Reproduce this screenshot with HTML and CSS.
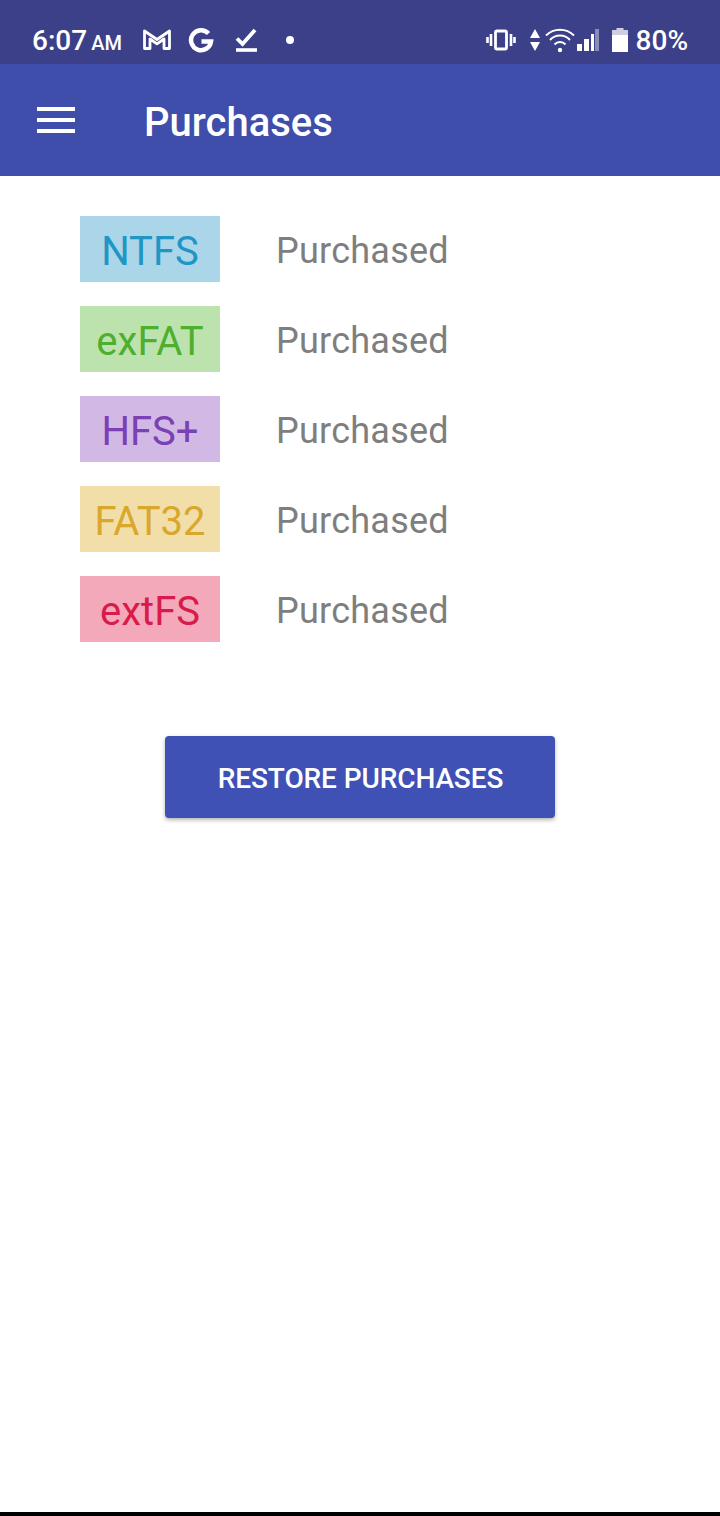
FILE: index.html
```html
<!DOCTYPE html>
<html lang="en">
<head>
    <meta charset="UTF-8">
    <title>Purchases</title>
    <link rel="stylesheet" href="styles.css">
</head>
<body>
<div class="status-bar">
    <div class="status-left">
        <span class="clock">6:07<small>AM</small></span>
        <svg class="icon-gmail" width="28" height="22" viewBox="0 0 28 22"><path d="M1.500 19.500V2L14 10.500 26.500 2V19.500H21V10L14 14.800 7 10V19.500Z" fill="none" stroke="#fff" stroke-width="2.800" stroke-linejoin="round"/></svg>
        <svg class="icon-g" width="26" height="26" viewBox="0 0 26 26"><path d="M20.500 6.500A10 10 0 1 0 23 14.500H13.500" fill="none" stroke="#fff" stroke-width="4.500"/></svg>
        <svg class="icon-check" width="24" height="26" viewBox="0 0 24 26"><path d="M3 11.500L8.500 17 21 3" fill="none" stroke="#fff" stroke-width="3.800"/><path d="M2 23H23" stroke="#fff" stroke-width="3.600"/></svg>
        <span class="dot"></span>
    </div>
    <div class="status-right">
        <svg width="30" height="22" viewBox="0 0 30 22"><rect x="9.500" y="2" width="11" height="18" rx="1.500" fill="none" stroke="#fff" stroke-width="2.800"/><path d="M5 5V17M1.500 8V14M25 5V17M28.500 8V14" stroke="#fff" stroke-width="2.600"/></svg>
        <svg class="icon-arrows" width="12" height="24" viewBox="0 0 12 24"><path d="M6 1L11 10H1ZM6 23L1 14H11Z" fill="#fff"/></svg>
        <svg class="icon-wifi" width="30" height="26" viewBox="0 0 30 26"><path d="M1 8.500A20 20 0 0 1 29 8.500M5 13A13.500 13.500 0 0 1 25 13M9.500 17.500A7.500 7.500 0 0 1 20.500 17.500" fill="none" stroke="#fff" stroke-width="2"/><circle cx="15" cy="23" r="2.200" fill="#fff"/></svg>
        <svg class="icon-signal" width="22" height="24" viewBox="0 0 22 24"><path d="M0 23V16H5V23ZM7 23V11H12V23ZM14 23V6H17V23Z" fill="#fff"/><path d="M18 23V1H22V23Z" fill="#fff" fill-opacity=".4"/></svg>
        <svg class="icon-battery" width="18" height="26" viewBox="0 0 18 26"><path d="M5.500 1H12.500V3H17V8H1V3H5.500Z" fill="#fff" fill-opacity=".75"/><path d="M1 8H17V25H1Z" fill="#fff"/></svg>
        <span class="battery-text">80%</span>
    </div>
</div>

<header class="app-bar">
    <svg class="menu-icon" width="38" height="26" viewBox="0 0 38 26"><path d="M0 2H38M0 13H38M0 24H38" stroke="#fff" stroke-width="4"/></svg>
    <h1>Purchases</h1>
</header>

<div class="purchase-list">
    <div class="purchase-row">
        <span class="fs-tag tag-ntfs">NTFS</span>
        <span class="purchase-state">Purchased</span>
    </div>
    <div class="purchase-row">
        <span class="fs-tag tag-exfat">exFAT</span>
        <span class="purchase-state">Purchased</span>
    </div>
    <div class="purchase-row">
        <span class="fs-tag tag-hfs">HFS+</span>
        <span class="purchase-state">Purchased</span>
    </div>
    <div class="purchase-row">
        <span class="fs-tag tag-fat32">FAT32</span>
        <span class="purchase-state">Purchased</span>
    </div>
    <div class="purchase-row">
        <span class="fs-tag tag-extfs">extFS</span>
        <span class="purchase-state">Purchased</span>
    </div>
</div>

<div class="restore-area">
    <a href="#" class="restore-button">RESTORE PURCHASES</a>
</div>

<div class="bottom-edge"></div>
</body>
</html>
```

FILE: styles.css
```css
html, body {
    margin: 0;
    height: 100%;
}

body {
    display: flex;
    flex-direction: column;
    background-color: #fff;
    font-family: Roboto, sans-serif;
}

.status-bar {
    display: flex;
    justify-content: space-between;
    align-items: center;
    height: 64px;
    padding: 16px 32px 0;
    box-sizing: border-box;
    background-color: #3b4088;
    color: #fff;
}

.status-left, .status-right {
    display: flex;
    align-items: center;
}

.clock {
    font-size: 28px;
    font-weight: 500;
    margin-right: 21px;
}

.clock small {
    font-size: 20px;
    margin-left: 4px;
}

.icon-g {
    margin-left: 17px;
}

.icon-check {
    margin-left: 20px;
}

.dot {
    width: 8px;
    height: 8px;
    margin-left: 28px;
    border-radius: 50%;
    background-color: #fff;
}

.icon-arrows {
    margin-left: 13px;
}

.icon-wifi {
    margin-left: 4px;
}

.icon-signal {
    margin-left: 2px;
}

.icon-battery {
    margin-left: 12px;
}

.battery-text {
    margin-left: 7px;
    font-size: 28px;
    font-weight: 500;
}

.app-bar {
    display: flex;
    align-items: center;
    height: 112px;
    padding-left: 37px;
    background-color: #3f4dab;
    color: #fff;
}

.app-bar h1 {
    margin: 5px 0 0 69px;
    font-size: 40px;
    font-weight: 500;
}

.purchase-list {
    display: flex;
    flex-direction: column;
    gap: 24px;
    padding: 40px 0 0 80px;
}

.purchase-row {
    display: flex;
    align-items: center;
}

.fs-tag {
    width: 140px;
    height: 66px;
    line-height: 72px;
    text-align: center;
    font-size: 40px;
}

.tag-ntfs {
    background-color: #abd6e9;
    color: #2196c4;
}

.tag-exfat {
    background-color: #bce3ae;
    color: #4fae2d;
}

.tag-hfs {
    background-color: #d2b9e5;
    color: #7b40b4;
}

.tag-fat32 {
    background-color: #f2dea8;
    color: #d9a72c;
}

.tag-extfs {
    background-color: #f4a9bb;
    color: #d81b4a;
}

.purchase-state {
    margin: 4px 0 0 56px;
    font-size: 36px;
    letter-spacing: 0.25px;
    color: #7e7e7e;
}

.restore-area {
    display: flex;
    justify-content: center;
    margin-top: 94px;
}

.restore-button {
    width: 390px;
    height: 82px;
    line-height: 85px;
    text-align: center;
    background-color: #3f51b5;
    color: #fff;
    font-size: 28px;
    font-weight: 500;
    letter-spacing: -0.1px;
    text-indent: 1px;
    text-decoration: none;
    border-radius: 4px;
    box-shadow: 0 2px 4px rgba(0, 0, 0, 0.3);
}

.bottom-edge {
    height: 4px;
    margin-top: auto;
    background-color: #000;
}
```
